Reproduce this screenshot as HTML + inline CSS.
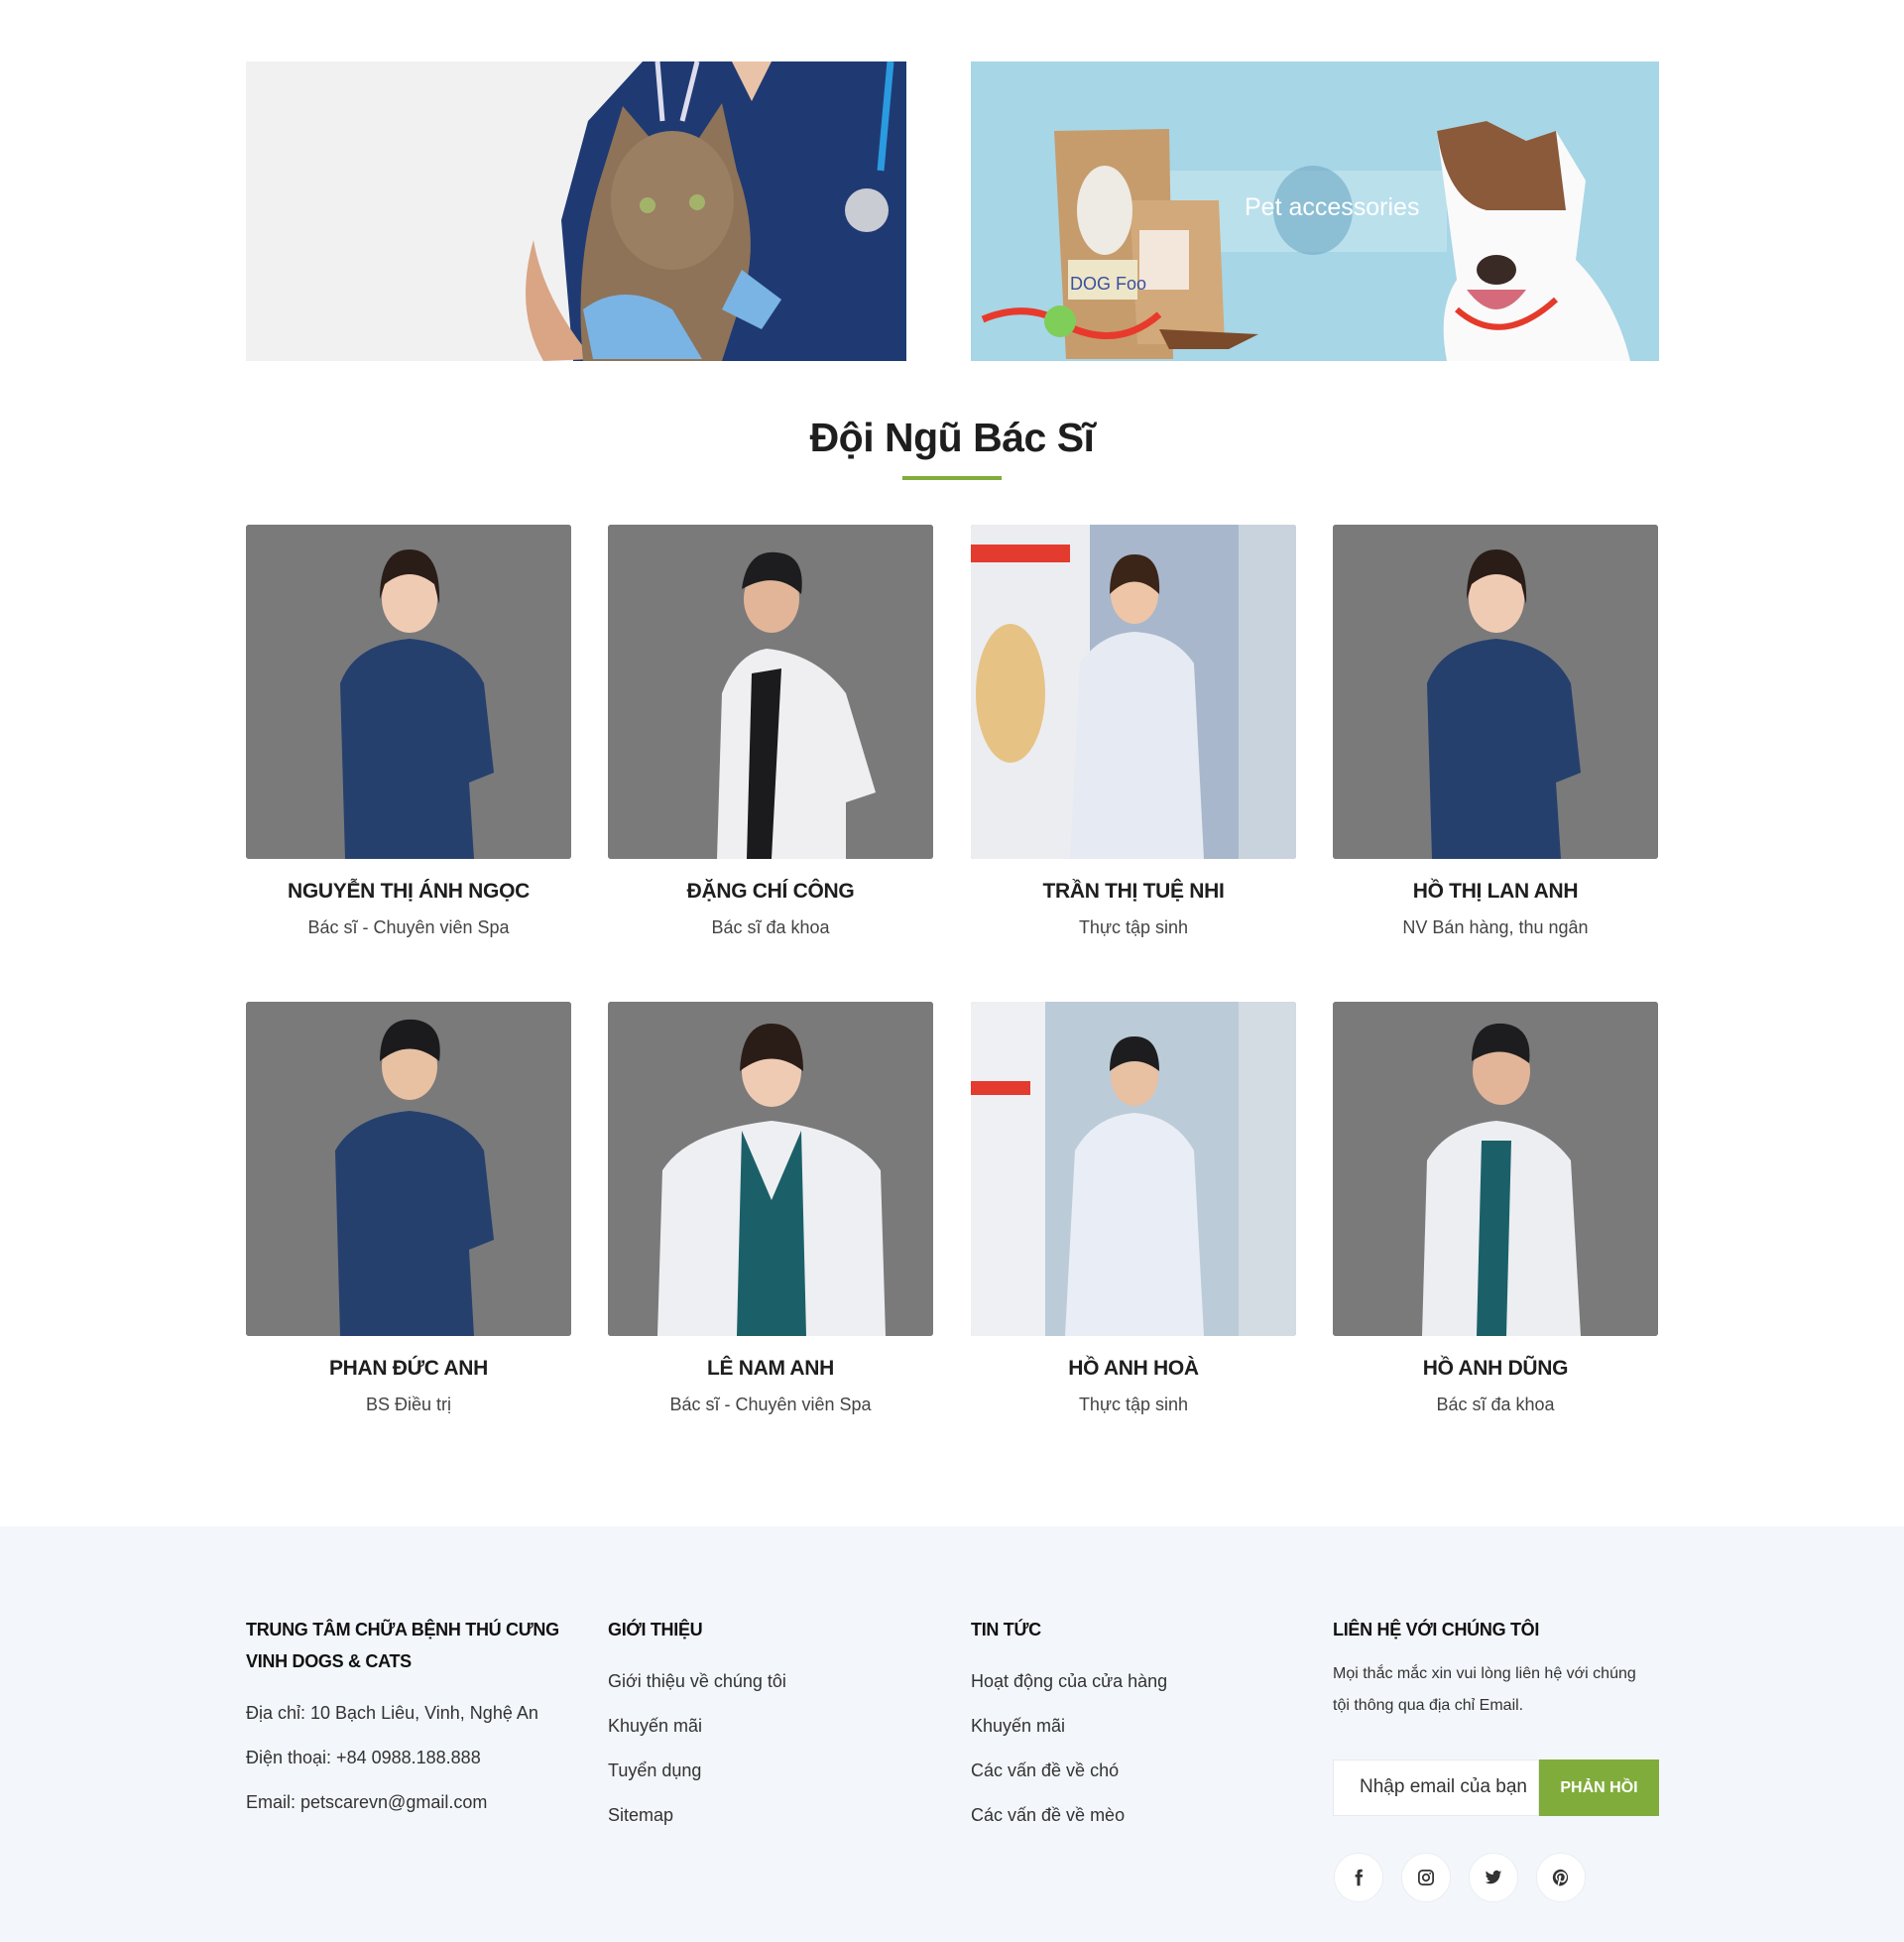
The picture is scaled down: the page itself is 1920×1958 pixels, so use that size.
<!DOCTYPE html>
<html><head><meta charset="utf-8">
<style>
*{margin:0;padding:0;box-sizing:border-box}
body{width:1920px;height:1958px;background:#fff;font-family:"Liberation Sans",sans-serif;position:relative;overflow:hidden;color:#222}
.abs{position:absolute}
.title{left:0;width:1920px;top:418px;text-align:center;font-size:41px;font-weight:bold;color:#1e1e1e;letter-spacing:-0.5px}
.ul{left:910px;top:480px;width:100px;height:4px;background:#80ac3b}
.card{position:absolute;width:328px}
.photo{width:328px;height:337px;border-radius:3px;overflow:hidden;background:#7b7b7b}
.name{text-align:center;font-weight:bold;font-size:21px;margin-top:21px;color:#1e1e1e;letter-spacing:-0.3px}
.role{text-align:center;font-size:18px;margin-top:14px;color:#444}
.footer{left:0;top:1539px;width:1920px;height:419px;background:#f3f6fa}
.fh{font-weight:bold;font-size:18px;color:#111;line-height:32px;letter-spacing:-0.3px}
.ft{font-size:18px;color:#333;line-height:45px}
.soc{position:absolute;top:1868px;width:50px;height:50px;border-radius:50%;background:#fff;border:1px solid #eaeef3;display:flex;align-items:center;justify-content:center}
</style></head><body>

<svg class="abs" style="left:248px;top:62px" width="666" height="302" viewBox="0 0 666 302">
<rect width="666" height="302" fill="#f1f1f2"/>
<path d="M400 0 L666 0 L666 302 L330 302 L318 160 L345 60 Z" fill="#1f3a73"/>
<path d="M490 0 L530 0 L510 40 Z" fill="#e9c3a8"/>
<path d="M415 0 L420 60 M455 0 L440 60" stroke="#dde" stroke-width="5"/>
<path d="M650 0 L640 110" stroke="#2a9be0" stroke-width="7"/>
<circle cx="626" cy="150" r="22" fill="#c9ccd2"/>
<path d="M290 180 Q300 240 350 300 L300 302 Q270 250 290 180Z" fill="#d9a585"/>
<path d="M360 110 L380 45 L410 80 L455 80 L480 42 L495 110 Q520 180 500 240 L480 302 L340 302 Q330 200 360 110Z" fill="#8e7358"/>
<ellipse cx="430" cy="140" rx="62" ry="70" fill="#9a7f63"/>
<circle cx="405" cy="145" r="8" fill="#a3b46a"/><circle cx="455" cy="142" r="8" fill="#a3b46a"/>
<path d="M340 250 Q380 220 430 250 L460 300 L350 300 Z" fill="#7ab4e4"/>
<path d="M500 210 L540 240 L520 270 L480 250Z" fill="#7ab4e4"/>
</svg>

<svg class="abs" style="left:979px;top:62px" width="694" height="302" viewBox="0 0 694 302">
<rect width="694" height="302" fill="#a7d6e6"/>
<rect x="200" y="110" width="280" height="82" fill="#bfe2ee" opacity=".8"/>
<ellipse cx="345" cy="150" rx="40" ry="45" fill="#6ea7c5" opacity=".6"/>
<text x="276" y="155" font-family="Liberation Sans" font-size="25" fill="#fff">Pet accessories</text>
<path d="M84 70 L200 68 L204 300 L96 300 Z" fill="#c69c6d"/>
<path d="M160 140 L250 140 L256 285 L168 285 Z" fill="#d2a97a"/>
<rect x="170" y="170" width="50" height="60" fill="#f3e7dc"/>
<ellipse cx="135" cy="150" rx="28" ry="45" fill="#eeeae4"/>
<rect x="98" y="200" width="70" height="40" fill="#eee6c8"/>
<text x="100" y="230" font-family="Liberation Sans" font-size="18" fill="#3a4fa0">DOG Foo</text>
<path d="M12 260 Q60 240 100 268 Q150 290 190 255" stroke="#e83a2c" stroke-width="7" fill="none"/>
<circle cx="90" cy="262" r="16" fill="#7fce5a"/>
<path d="M190 270 L290 275 L260 290 L200 290Z" fill="#7b4a2a"/>
<path d="M470 70 L520 60 L560 80 L590 70 L620 120 L610 200 Q650 240 665 302 L480 302 Q470 250 490 220 Z" fill="#fafafa"/>
<path d="M470 70 L520 60 L560 80 L590 70 L600 150 L520 150 Q480 140 470 70Z" fill="#8a5a3a"/>
<ellipse cx="530" cy="210" rx="20" ry="15" fill="#3a2a25"/>
<path d="M500 230 Q530 270 560 230" fill="#d56b7a"/>
<path d="M490 250 Q535 290 590 240" stroke="#e53a2a" stroke-width="6" fill="none"/>
</svg>

<div class="abs title">Đội Ngũ Bác Sĩ</div>
<div class="abs ul"></div>

<div class="card" style="left:248px;top:529px"><div class="photo"><svg width="328" height="337"><rect width="328" height="337" fill="#7a7a7b"/><path d="M100 337 L95 160 Q110 120 165 115 Q220 120 240 160 L250 250 L225 260 L230 337Z" fill="#26406e"/><ellipse cx="165" cy="75" rx="28" ry="34" fill="#f0cbb3"/><path d="M135 75 Q135 25 165 25 Q197 25 195 80 L190 60 Q165 40 140 60Z" fill="#2a1d18"/></svg></div><div class="name">NGUYỄN THỊ ÁNH NGỌC</div><div class="role">Bác sĩ - Chuyên viên Spa</div></div>

<div class="card" style="left:613px;top:529px"><div class="photo"><svg width="328" height="337"><rect width="328" height="337" fill="#7a7a7b"/><path d="M110 337 L115 170 Q130 130 160 125 Q210 130 240 170 L270 270 L240 280 L240 337Z" fill="#efeff1"/><path d="M140 337 L145 150 L175 145 L165 337Z" fill="#1b1b1d"/><ellipse cx="165" cy="75" rx="28" ry="34" fill="#e2b598"/><path d="M135 65 Q140 25 170 28 Q200 30 195 70 Q170 45 135 65Z" fill="#1d1d1f"/></svg></div><div class="name">ĐẶNG CHÍ CÔNG</div><div class="role">Bác sĩ đa khoa</div></div>

<div class="card" style="left:979px;top:529px"><div class="photo"><svg width="328" height="337"><rect width="328" height="337" fill="#a8b7cc"/><rect width="120" height="337" fill="#ecedf1"/><rect x="0" y="20" width="100" height="18" fill="#e33b2e"/><ellipse cx="40" cy="170" rx="35" ry="70" fill="#e5b86a" opacity=".8"/><rect x="270" y="0" width="58" height="337" fill="#c9d3dd"/><path d="M100 337 L110 140 Q130 110 165 108 Q205 110 225 140 L235 337Z" fill="#e6eaf2"/><ellipse cx="165" cy="70" rx="24" ry="30" fill="#eec5a6"/><path d="M140 70 Q140 30 165 30 Q192 30 190 70 Q165 45 140 70Z" fill="#3a2518"/></svg></div><div class="name">TRẦN THỊ TUỆ NHI</div><div class="role">Thực tập sinh</div></div>

<div class="card" style="left:1344px;top:529px"><div class="photo"><svg width="328" height="337"><rect width="328" height="337" fill="#7a7a7b"/><path d="M100 337 L95 160 Q110 120 165 115 Q220 120 240 160 L250 250 L225 260 L230 337Z" fill="#26406e"/><ellipse cx="165" cy="75" rx="28" ry="34" fill="#f0cbb3"/><path d="M135 75 Q135 25 165 25 Q197 25 195 80 L190 60 Q165 40 140 60Z" fill="#2a1d18"/></svg></div><div class="name">HỒ THỊ LAN ANH</div><div class="role">NV Bán hàng, thu ngân</div></div>

<div class="card" style="left:248px;top:1010px"><div class="photo"><svg width="328" height="337"><rect width="328" height="337" fill="#7a7a7b"/><path d="M95 337 L90 150 Q110 115 165 110 Q220 115 240 150 L250 240 L225 250 L230 337Z" fill="#26406e"/><ellipse cx="165" cy="65" rx="28" ry="34" fill="#e8c0a2"/><path d="M135 60 Q135 15 170 18 Q200 22 195 60 Q165 35 135 60Z" fill="#1b1b1d"/></svg></div><div class="name">PHAN ĐỨC ANH</div><div class="role">BS Điều trị</div></div>

<div class="card" style="left:613px;top:1010px"><div class="photo"><svg width="328" height="337"><rect width="328" height="337" fill="#7a7a7b"/><path d="M50 337 L55 170 Q80 130 165 120 Q250 130 275 170 L280 337Z" fill="#eeeff2"/><path d="M135 130 L165 200 L195 130 L200 337 L130 337Z" fill="#1b6069"/><ellipse cx="165" cy="70" rx="30" ry="36" fill="#f0cbb3"/><path d="M133 70 Q135 22 165 22 Q197 22 197 70 Q165 45 133 70Z" fill="#2a1d18"/></svg></div><div class="name">LÊ NAM ANH</div><div class="role">Bác sĩ - Chuyên viên Spa</div></div>

<div class="card" style="left:979px;top:1010px"><div class="photo"><svg width="328" height="337"><rect width="328" height="337" fill="#bccbd8"/><rect width="75" height="337" fill="#eef0f3"/><rect x="0" y="80" width="60" height="14" fill="#e33b2e"/><rect x="270" y="0" width="58" height="337" fill="#d3dbe3"/><path d="M95 337 L105 150 Q125 115 165 112 Q205 115 225 150 L235 337Z" fill="#e9edf5"/><ellipse cx="165" cy="75" rx="24" ry="30" fill="#e8c0a2"/><path d="M140 70 Q140 35 165 35 Q190 35 190 70 Q165 50 140 70Z" fill="#1d1d1f"/></svg></div><div class="name">HỒ ANH HOÀ</div><div class="role">Thực tập sinh</div></div>

<div class="card" style="left:1344px;top:1010px"><div class="photo"><svg width="328" height="337"><rect width="328" height="337" fill="#7a7a7b"/><path d="M90 337 L95 160 Q115 125 165 120 Q215 125 240 160 L250 337Z" fill="#eceef1"/><path d="M150 140 L180 140 L175 337 L145 337Z" fill="#1b6069"/><ellipse cx="170" cy="70" rx="29" ry="34" fill="#e2b598"/><path d="M140 60 Q140 20 172 22 Q202 25 198 62 Q170 40 140 60Z" fill="#1d1d1f"/></svg></div><div class="name">HỒ ANH DŨNG</div><div class="role">Bác sĩ đa khoa</div></div>

<div class="abs footer"></div>
<div class="abs fh" style="left:248px;top:1627px">TRUNG TÂM CHỮA BỆNH THÚ CƯNG<br>VINH DOGS &amp; CATS</div>
<div class="abs ft" style="left:248px;top:1705px">Địa chỉ: 10 Bạch Liêu, Vinh, Nghệ An<br>Điện thoại: +84 0988.188.888<br>Email: petscarevn@gmail.com</div>

<div class="abs fh" style="left:613px;top:1627px">GIỚI THIỆU</div>
<div class="abs ft" style="left:613px;top:1673px">Giới thiệu về chúng tôi<br>Khuyến mãi<br>Tuyển dụng<br>Sitemap</div>

<div class="abs fh" style="left:979px;top:1627px">TIN TỨC</div>
<div class="abs ft" style="left:979px;top:1673px">Hoạt động của cửa hàng<br>Khuyến mãi<br>Các vấn đề về chó<br>Các vấn đề về mèo</div>

<div class="abs fh" style="left:1344px;top:1627px">LIÊN HỆ VỚI CHÚNG TÔI</div>
<div class="abs" style="left:1344px;top:1672px;font-size:16px;line-height:32px;color:#333;width:340px">Mọi thắc mắc xin vui lòng liên hệ với chúng<br>tội thông qua địa chỉ Email.</div>
<div class="abs" style="left:1344px;top:1774px;width:208px;height:57px;background:#fff;border:1px solid #e6e9ee;font-size:19px;color:#333;padding:16px 0 0 26px">Nhập email của bạn</div>
<div class="abs" style="left:1552px;top:1774px;width:121px;height:57px;background:#80ac3b;color:#fff;font-weight:bold;font-size:16px;text-align:center;line-height:57px">PHẢN HỒI</div>

<div class="soc" style="left:1345px"><svg width="18" height="18" viewBox="0 0 24 24"><path d="M14 8V6c0-1 .5-1.5 1.5-1.5H17V1h-3c-3 0-4 2-4 4.5V8H7.5v3.5H10V23h4V11.5h3l.5-3.5Z" fill="#333"/></svg></div>
<div class="soc" style="left:1413px"><svg width="18" height="18" viewBox="0 0 24 24"><rect x="2.5" y="2.5" width="19" height="19" rx="5" fill="none" stroke="#333" stroke-width="2.3"/><circle cx="12" cy="12" r="4.3" fill="none" stroke="#333" stroke-width="2.3"/><circle cx="17.6" cy="6.4" r="1.3" fill="#333"/></svg></div>
<div class="soc" style="left:1481px"><svg width="18" height="18" viewBox="0 0 24 24"><path d="M23 4.6c-.8.4-1.7.6-2.6.7.9-.6 1.6-1.4 2-2.5-.9.5-1.9.9-2.9 1.1A4.5 4.5 0 0 0 11.8 8C8 7.8 4.7 6 2.5 3.3c-1.2 2-.6 4.6 1.4 6-.7 0-1.4-.2-2-.6 0 2.2 1.5 4.1 3.6 4.5-.7.2-1.4.2-2 .1.6 1.8 2.3 3.1 4.2 3.1A9 9 0 0 1 1 18.3 12.8 12.8 0 0 0 7.9 20.3c8.3 0 12.9-7 12.9-13v-.6c.9-.6 1.6-1.4 2.2-2.3Z" fill="#333"/></svg></div>
<div class="soc" style="left:1549px"><svg width="18" height="18" viewBox="0 0 24 24"><path d="M12 1a11 11 0 0 0-4 21.2c-.1-.9-.2-2.2 0-3.2l1.3-5.5s-.3-.7-.3-1.7c0-1.6.9-2.8 2.1-2.8 1 0 1.5.7 1.5 1.6 0 1-.6 2.5-1 3.9-.3 1.2.6 2.1 1.7 2.1 2.1 0 3.7-2.2 3.7-5.4 0-2.8-2-4.8-4.9-4.8-3.3 0-5.3 2.5-5.3 5.1 0 1 .4 2.1.9 2.7.1.1.1.2.1.3l-.3 1.3c-.1.2-.2.3-.4.2-1.5-.7-2.4-2.9-2.4-4.6 0-3.8 2.7-7.2 7.9-7.2 4.1 0 7.3 2.9 7.3 6.9 0 4.1-2.6 7.4-6.2 7.4-1.2 0-2.3-.6-2.7-1.4l-.7 2.8c-.3 1-1 2.3-1.5 3.1A11 11 0 1 0 12 1Z" fill="#333"/></svg></div>

</body></html>
